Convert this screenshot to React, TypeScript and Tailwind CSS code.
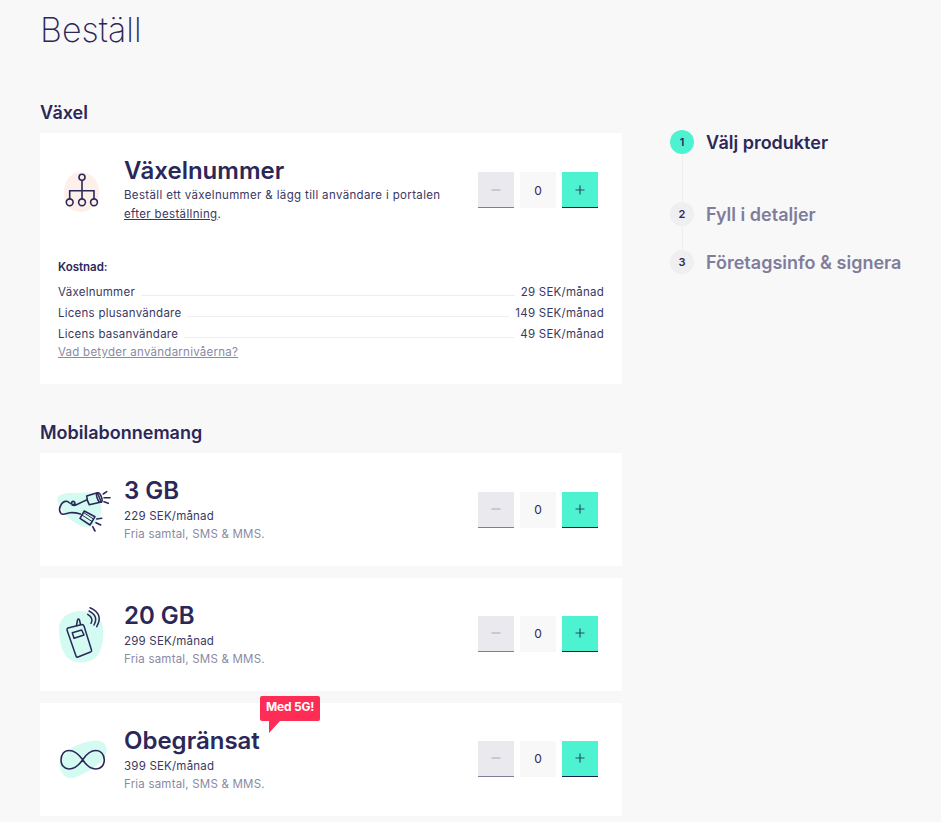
import { Minus, Plus } from "lucide-react";

const font = { fontFamily: "Inter, 'Noto Sans', sans-serif" };

function Blob({ d }: { d: string }) {
  return <path d={d} fill="currentColor" stroke="none" />;
}

function SwitchIcon() {
  return (
    <svg width="48" height="48" viewBox="0 0 48 48" fill="none" stroke="#2b2859" strokeWidth="1.6" className="text-[#fdf0ea]">
      <Blob d="M6 24C6 10 14 3 23 3c10 0 18 8 18 20 0 12-8 20-18 20C12 43 6 36 6 24Z" />
      <circle cx="24" cy="8.300" r="3" />
      <path d="M24 11.300v18.500M11.700 29.800v-8h24.300v8" />
      <circle cx="11.700" cy="33.300" r="3.400" />
      <circle cx="24" cy="33.300" r="3.400" />
      <circle cx="36" cy="33.300" r="3.400" />
    </svg>
  );
}

function CansIcon() {
  return (
    <svg width="60" height="48" viewBox="0 0 60 48" fill="none" stroke="#2b2859" strokeWidth="1.6" strokeLinecap="round" strokeLinejoin="round" className="text-[#d3fbf1]">
      <Blob d="M1 12C5 7 12 7 17 7L34 6.500C40 7 44 10 45 16 47 24 44 34 37 39 30 43 24 40 18 36 12 32 3 24 1 12Z" />
      <path d="M30.500 14C27 15.500 24 17 21 18.500 18 20 15 19.500 15.500 17 16 14.500 19 15 19 17.500 19 19 16 19 13 16.500 11 14.500 7.500 15 5.500 18 3.500 21 3 25 5 27.500 7 29.500 11 27 14 26.700 17.500 26.400 21 27 24.500 28" />
      <path d="M30.700 10L41.300 6.700 45.300 16 33.300 18.700C31.500 16 30.800 13 30.700 10Z" />
      <ellipse cx="43.300" cy="11.500" rx="2.200" ry="5" transform="rotate(-20 43.300 11.500)" />
      <path d="M28.300 25L24 32.300 34 39 39 30.700Z" />
      <path d="M26 29L36 35.500M27.500 26.500L37.500 33" strokeWidth="1" />
      <path d="M47.300 8L50.700 5.700M48 11.700H54M48 15.700L52.300 17.300M40.700 33L45.700 32.300M40 36.700L44.700 39M36.700 40.700L39 45" />
    </svg>
  );
}

function PhoneIcon() {
  return (
    <svg width="48" height="62" viewBox="0 0 48 62" fill="none" stroke="#2b2859" strokeWidth="1.5" strokeLinecap="round" strokeLinejoin="round" className="text-[#d3fbf1]">
      <Blob d="M3 25C3 13 14 7 24 7 36 7 46 12 47 24 48 34 46 50 38 55 30 60 16 60 10 52 5 45 3 35 3 25Z" />
      <path d="M12 24L26 20.500Q27.500 20.500 28 22L35.500 46Q36 47.500 34.500 48L22 53Q20.500 53.500 20 52L11 26Q10.800 24.500 12 24Z" />
      <path d="M16.300 28.700L25.700 26 28 31 18 34.300Z" />
      <path d="M20.500 21.500L21.500 16Q22.500 14 23.500 16L24.500 20.500" />
      <path d="M31.700 10.300Q38 14 35 19.300M33 7Q43 12 38 21M34 3.700Q48 10 40.700 22.700" />
    </svg>
  );
}

function InfinityIcon() {
  return (
    <svg width="52" height="42" viewBox="0 0 52 42" fill="none" stroke="#2b2859" strokeWidth="1.6" className="text-[#d3fbf1]">
      <Blob d="M3 25C6 17 12 10 20.700 6.500 28 3 35 1.500 40.700 1.500 47 1.500 51 6 50.700 11.500 50.500 18 46 23 40.700 26.500 33 32 25 37 17.300 39 11 40 5 37 3 25Z" />
      <path d="M26.700 20.800C22 14 17 11.500 13 11.500 8 11.500 5 15.500 5 20.800 5 26 8 30 13 30 17 30 22 27.500 26.700 20.800 31 14 36 11.500 40 11.500 45 11.500 48.300 15.500 48.300 20.800 48.300 26 45 30 40 30 36 30 31 27.500 26.700 20.800Z" />
    </svg>
  );
}

function Counter() {
  return (
    <div className="flex gap-[6px]">
      <button className="w-9 h-9 flex items-center justify-center bg-[#e9e9ee] border-b border-[#7f7d9b] text-[#a9a8bd]">
        <Minus size={14} strokeWidth={2} />
      </button>
      <div className="w-9 h-9 flex items-center justify-center bg-[#f8f8f8] pt-[1px] text-[12px] text-[#2b2859]">0</div>
      <button className="w-9 h-9 flex items-center justify-center bg-[#4df3d0] border-b border-[#17204f] text-[#2b4a6a]">
        <Plus size={14} strokeWidth={2} />
      </button>
    </div>
  );
}

function CostRow({ label, price }: { label: string; price: string }) {
  return (
    <div className="flex items-baseline h-[21px] text-[11.500px] text-[#3a3862] tracking-[0.25px]">
      <span>{label}</span>
      <span className="flex-1 mx-[6px] border-b border-[#eeeeee]" />
      <span>{price}</span>
    </div>
  );
}

function Plan({ icon, name, price, badge, lift }: { icon: any; name: string; price: string; badge?: boolean; lift?: boolean }) {
  return (
    <div className="flex items-center h-[113px] bg-white pr-6">
      <div className="w-[84px] h-full flex items-center pl-[16px] shrink-0">{icon}</div>
      <div className="flex-1 pt-[1px]">
        <div className="relative w-fit text-[24px] leading-[26px] font-semibold text-[#2b2859]">
          {name}
          {badge && (
            <div className="absolute left-[136px] top-[-32px] w-[60px] h-[25px] bg-[#ff2d55] rounded-[2px] pl-[6px] pt-[4px] text-[12px] leading-[14px] font-bold tracking-[-0.2px] text-white">
              Med 5G!
              <span className="absolute left-[9px] top-[25px] w-0 h-0 border-r-[11px] border-t-[12px] border-r-transparent border-t-[#ff2d55]" />
            </div>
          )}
        </div>
        <p className="mt-[3px] text-[11.500px] leading-[18px] text-[#3a3862] tracking-[0.2px]">{price}</p>
        <p className="text-[11.500px] leading-[18px] text-[#8a8aa3] tracking-[0.2px]">Fria samtal, SMS &amp; MMS.</p>
      </div>
      <div className={lift ? "pb-[2px]" : ""}>
        <Counter />
      </div>
    </div>
  );
}

function Step({ n, label, active }: { n: number; label: string; active?: boolean }) {
  return (
    <div className="flex items-center gap-3 h-6">
      <div
        className={`w-6 h-6 rounded-full flex items-center justify-center text-[11px] font-semibold text-[#2b2859] ${
          active ? "bg-[#4df3d0]" : "bg-[#efeff1]"
        }`}
      >
        {n}
      </div>
      <span className={`text-[18px] font-semibold whitespace-nowrap ${active ? "text-[#2b2859]" : "text-[#7f7d9b]"}`}>{label}</span>
    </div>
  );
}

export default function App() {
  return (
    <div className="h-[822px] overflow-hidden bg-[#f8f8f8] pl-10" style={font}>
      <h1 className="pt-[9px] text-[34px] leading-[42px] font-extralight text-[#2b2859]">Beställ</h1>

      <div className="flex mt-[49px]">
        <div className="w-[582px] shrink-0">
          <h2 className="text-[18px] leading-[26px] font-semibold text-[#2b2859] mb-[7px]">Växel</h2>
          <div className="bg-white h-[251px] pl-[18px] pr-[18px]">
            <div className="flex items-start pt-[23px]">
              <div className="w-[66px] pt-[13px] shrink-0">
                <SwitchIcon />
              </div>
              <div className="flex-1">
                <h3 className="text-[24px] leading-[30px] font-semibold text-[#2b2859]">Växelnummer</h3>
                <p className="text-[11.500px] leading-[19px] text-[#3a3862] tracking-[0.35px]">
                  Beställ ett växelnummer &amp; lägg till användare i portalen
                  <br />
                  <span className="underline">efter beställning</span>.
                </p>
              </div>
              <div className="pt-[16px] pr-[6px]">
                <Counter />
              </div>
            </div>

            <p className="mt-[34px] mb-[8px] text-[11.500px] leading-[18px] font-semibold text-[#2b2859]">Kostnad:</p>
            <CostRow label="Växelnummer" price="29 SEK/månad" />
            <CostRow label="Licens plusanvändare" price="149 SEK/månad" />
            <CostRow label="Licens basanvändare" price="49 SEK/månad" />
            <a className="block -mt-[2px] text-[11.500px] leading-[15px] text-[#8a8aa3] underline tracking-[0.25px]">
              Vad betyder användarnivåerna?
            </a>
          </div>

          <h2 className="mt-[36px] mb-[7px] text-[18px] leading-[26px] font-semibold text-[#2b2859]">Mobilabonnemang</h2>
          <div className="flex flex-col gap-3">
            <Plan icon={<CansIcon />} name="3 GB" price="229 SEK/månad" />
            <Plan icon={<PhoneIcon />} name="20 GB" price="299 SEK/månad" lift />
            <Plan icon={<InfinityIcon />} name="Obegränsat" price="399 SEK/månad" badge lift />
          </div>
        </div>

        <div className="ml-12 pt-[30px]">
          <Step n={1} label="Välj produkter" active />
          <div className="ml-[11.500px] w-px h-12 bg-[#eeeeee]" />
          <Step n={2} label="Fyll i detaljer" />
          <div className="ml-[11.500px] w-px h-6 bg-[#eeeeee]" />
          <Step n={3} label="Företagsinfo & signera" />
        </div>
      </div>
    </div>
  );
}
